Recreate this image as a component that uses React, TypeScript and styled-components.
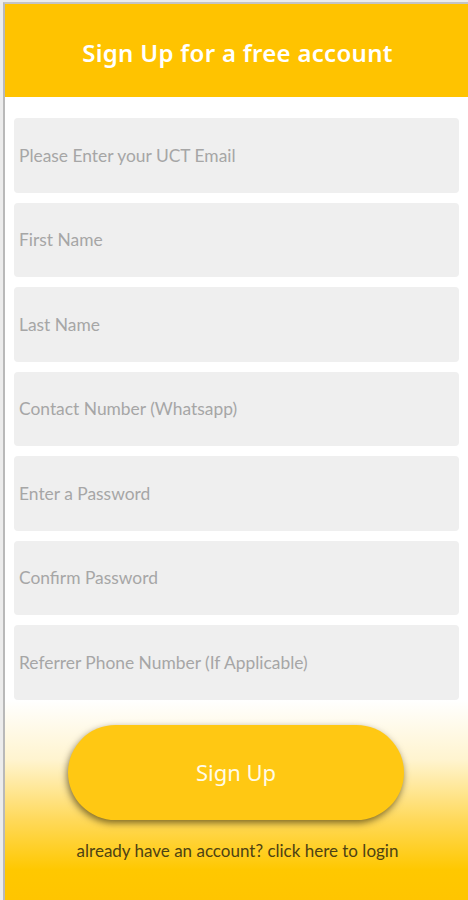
import React from "react";
import styled, { createGlobalStyle } from "styled-components";

const Global = createGlobalStyle`
  html, body { margin: 0; padding: 0; background: #f2f2f2; }
  #root { min-height: 900px; }
  * { box-sizing: border-box; }
`;

const Frame = styled.div`
  padding: 2px 0 0 3px;
  background: #ececec;
  height: 900px;
  overflow: hidden;
`;

const Card = styled.div`
  border-left: 2px solid #b9b9b9;
  border-top: 2px solid #c4c4c4;
  background: #fff;
  height: 898px;
  display: flex;
  flex-direction: column;
`;

const Header = styled.div`
  height: 93px;
  background: #ffc300;
  display: flex;
  align-items: center;
  justify-content: center;
  padding: 4px 0 0 2px;
`;

const Title = styled.h1`
  margin: 0;
  font-family: "Noto Sans", sans-serif;
  font-weight: 600;
  font-size: 24px;
  color: #fff;
  letter-spacing: 0.3px;
`;

const Form = styled.form`
  display: flex;
  flex-direction: column;
  gap: 10px;
  padding: 21px 9px 0 9px;
`;

const Field = styled.input`
  height: 74.5px;
  border: none;
  border-radius: 4px;
  background: #efefef;
  padding: 0 5px;
  font-family: "Lato", sans-serif;
  font-size: 17.4px;
  color: #555;
  outline: none;
  &::placeholder { color: #a6a6a6; }
`;

const Footer = styled.div`
  flex: 1;
  display: flex;
  flex-direction: column;
  align-items: center;
  padding-top: 25px;
  background: linear-gradient(to bottom, #ffffff 0%, #fff4cf 30%, #ffd95a 60%, #ffc800 85%, #ffc500 100%);
`;

const Button = styled.button`
  width: 336px;
  height: 95px;
  margin-left: -1px;
  border: none;
  border-radius: 48px;
  background: #ffc813;
  box-shadow: -1px 3px 7px rgba(40, 30, 0, 0.6);
  font-family: "Noto Sans", sans-serif;
  font-size: 22px;
  color: #fffbe8;
  cursor: pointer;
`;

const LoginLink = styled.a`
  margin-top: 20px;
  margin-left: 2px;
  font-family: "Lato", sans-serif;
  font-size: 17px;
  color: #4d4214;
  text-decoration: none;
`;

const fields = [
  "Please Enter your UCT Email",
  "First Name",
  "Last Name",
  "Contact Number (Whatsapp)",
  "Enter a Password",
  "Confirm Password",
  "Referrer Phone Number (If Applicable)",
];

export default function App() {
  return (
    <>
      <Global />
      <Frame>
        <Card>
          <Header>
            <Title>Sign Up for a free account</Title>
          </Header>
          <Form onSubmit={(e) => e.preventDefault()}>
            {fields.map((f) => (
              <Field key={f} placeholder={f} type={f.includes("Password") ? "password" : "text"} />
            ))}
          </Form>
          <Footer>
            <Button type="button">Sign Up</Button>
            <LoginLink href="#">already have an account? click here to login</LoginLink>
          </Footer>
        </Card>
      </Frame>
    </>
  );
}
